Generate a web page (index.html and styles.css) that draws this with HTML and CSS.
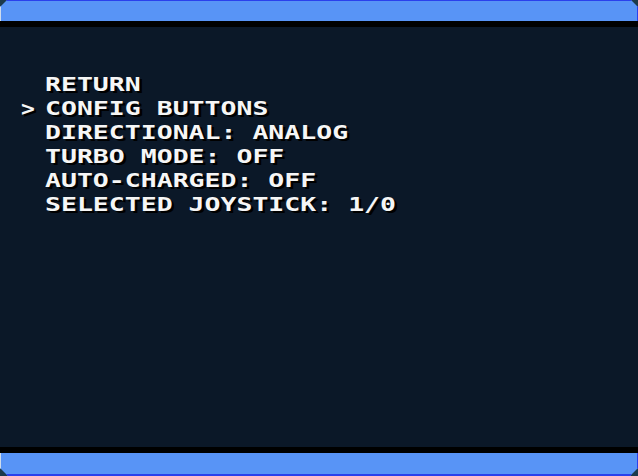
FILE: index.html
```html
<!DOCTYPE html>
<html lang="en">
<head>
  <meta charset="UTF-8">
  <title>Input Options</title>
  <link rel="stylesheet" href="styles.css">
</head>
<body>
  <div class="screen">
    <!-- top frame -->
    <div class="frame frame-top">
      <div class="bar"></div>
    </div>
    <div class="strip"></div>

    <div class="menu">
      <div class="row"><span class="caret"></span><span class="label">RETURN</span></div>
      <div class="row active"><span class="caret">&gt;</span><span class="label">CONFIG BUTTONS</span></div>
      <div class="row"><span class="caret"></span><span class="label">DIRECTIONAL: ANALOG</span></div>
      <div class="row"><span class="caret"></span><span class="label">TURBO MODE: OFF</span></div>
      <div class="row"><span class="caret"></span><span class="label">AUTO-CHARGED: OFF</span></div>
      <div class="row"><span class="caret"></span><span class="label">SELECTED JOYSTICK: 1/0</span></div>
    </div>

    <!-- bottom frame -->
    <div class="strip"></div>
    <div class="frame frame-bottom">
      <div class="bar"></div>
    </div>
  </div>
</body>
</html>
```
FILE: styles.css
```css
:root {
  --bg: #0b1828;
  --bar: #5894f6;
  --bar-edge: #2a40ec;
  --corner: #1c3a4b;
  --fg: #f6f6f6;
}
* { box-sizing: border-box; }
html, body {
  margin: 0;
  height: 100%;
  background: var(--bg);
}
.screen {
  height: 476px;
  display: flex;
  flex-direction: column;
}
.frame {
  height: 21px;
  background: var(--corner);
}
.bar {
  height: 100%;
  background: var(--bar);
  border-right: 1px solid var(--bar-edge);
  border-left: 1px solid #cfdcec;
}
.frame-top .bar {
  border-top: 1px solid var(--bar-edge);
  clip-path: polygon(7px 0, calc(100% - 7px) 0, 100% 7px, 100% 100%, 0 100%, 0 7px);
}
.frame-bottom { height: 23px; }
.frame-bottom .bar {
  border-bottom: 2px solid var(--bar-edge);
  clip-path: polygon(0 0, 100% 0, 100% calc(100% - 8px), calc(100% - 8px) 100%, 8px 100%, 0 calc(100% - 8px));
}
.strip {
  height: 6px;
  background: #000;
}
.menu {
  flex: 1;
  padding: 45px 0 0 21px;
  font-family: "DejaVu Sans Mono", monospace;
  font-weight: bold;
  font-size: 20px;
  line-height: 24px;
  color: var(--fg);
  text-shadow: 2px 2px 0 #000;
}
.row {
  display: flex;
  height: 24px;
}
.caret {
  width: 24px;
  display: block;
  transform: scale(1.15, 1.1);
  transform-origin: 0 50%;
}
.label {
  display: block;
  white-space: pre;
  transform: scaleX(1.325);
  transform-origin: 0 0;
}
```
